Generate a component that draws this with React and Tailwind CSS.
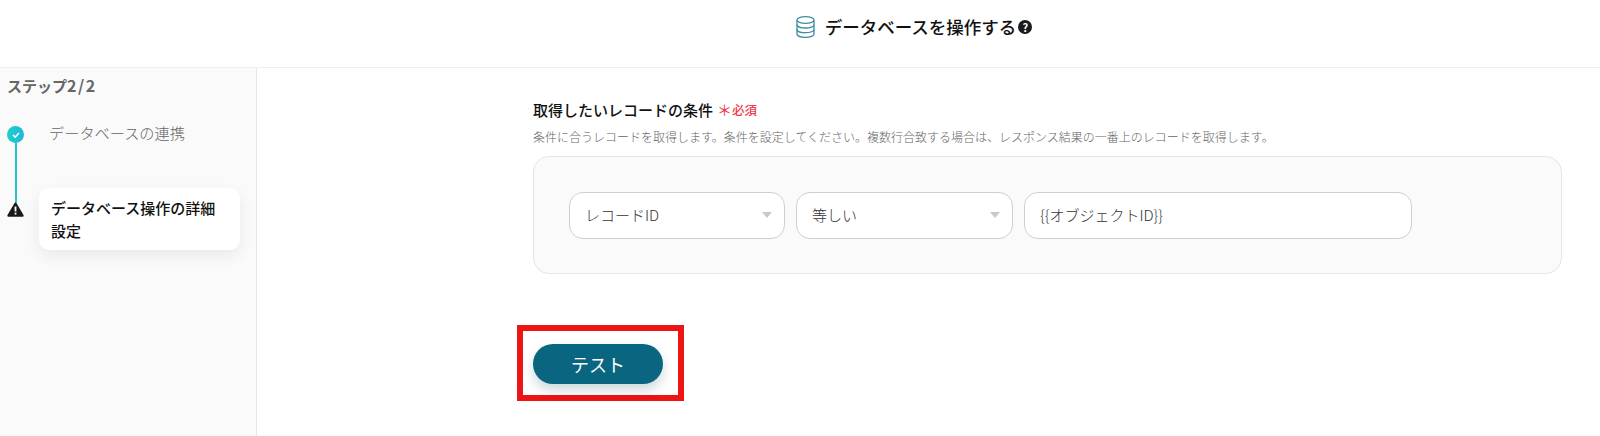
const FONT = "font-['Noto_Sans_CJK_JP','Noto_Sans',sans-serif]";

function DatabaseIcon() {
  return (
    <svg width="19" height="22" viewBox="0 0 19 22" fill="none" stroke="#3f8ba3" strokeWidth="1.3">
      <ellipse cx="9.500" cy="4" rx="8.500" ry="3.300" />
      <path d="M1 4v14c0 1.900 3.800 3.300 8.500 3.300s8.500-1.400 8.500-3.300V4" />
      <path d="M1 8.700c0 1.900 3.800 3.300 8.500 3.300s8.500-1.400 8.500-3.300" />
      <path d="M1 13.400c0 1.900 3.800 3.300 8.500 3.300s8.500-1.400 8.500-3.300" />
    </svg>
  );
}

function HelpIcon() {
  return (
    <span className="flex h-[14px] w-[14px] items-center justify-center rounded-full bg-[#1a1a1a] text-[11px] font-bold leading-none text-white">
      ?
    </span>
  );
}

function SelectBox({ label, className }) {
  return (
    <div className={`flex h-[47px] items-center justify-between rounded-[14px] border border-[#cfcfcf] bg-white pl-[15px] pr-[12px] text-[15px] font-light text-[#333] ${className}`}>
      <span>{label}</span>
      <svg width="10" height="6" viewBox="0 0 10 6" fill="#c9c9c9">
        <path d="M0 0h10L5 6z" />
      </svg>
    </div>
  );
}

export default function App() {
  return (
    <div className={`flex h-[436px] flex-col overflow-hidden bg-white ${FONT}`}>
      {/* header */}
      <div className="flex h-[68px] shrink-0 items-start justify-center border-b border-[#eeeeee] pl-[228px] pt-[16px]">
        <div className="flex items-center">
          <DatabaseIcon />
          <span className="ml-[10px] text-[17.500px] font-medium leading-[22px] text-[#111]">データベースを操作する</span>
          <span className="ml-[2px]"><HelpIcon /></span>
        </div>
      </div>

      <div className="flex min-h-0 flex-1">
        {/* sidebar */}
        <div className="w-[257px] shrink-0 border-r border-[#e6e6e6] bg-[#fafafa]">
          <div className="pl-[7px] pt-[6px] text-[15px] font-bold leading-[22px] text-[#666]">
            ステップ<span className="text-[16px] tracking-[1.500px]">2/2</span>
          </div>
          <div className="mt-[26px] flex items-start pl-[7px]">
            <div className="flex w-[17px] shrink-0 flex-col items-center pt-[3px]">
              <span className="flex h-[17px] w-[17px] items-center justify-center rounded-full bg-gradient-to-r from-[#1fcfc4] to-[#22b5e0]">
                <svg width="10" height="10" viewBox="0 0 10 10" fill="none" stroke="#fff" strokeWidth="1.600">
                  <path d="M2 5l2.200 2.200L8 3" />
                </svg>
              </span>
              <span className="h-[60px] w-[2px] bg-[#25c7c9]" />
              <svg width="17" height="15" viewBox="0 0 17 15" fill="#1a1a1a" className="-mt-[1px]">
                <path d="M8.500 0.500a1.300 1.300 0 0 1 1.100.7l6.900 11.700a1.300 1.300 0 0 1-1.100 1.900H1.600a1.300 1.300 0 0 1-1.100-1.900L7.400 1.200a1.300 1.300 0 0 1 1.100-.7z" />
                <rect x="7.600" y="4.500" width="1.800" height="5" fill="#fff" />
                <rect x="7.600" y="10.700" width="1.800" height="1.800" fill="#fff" />
              </svg>
            </div>
            <div className="ml-[15px] w-[201px]">
              <div className="pl-[10px] text-[15.200px] font-light leading-[18px] text-[#666]">データベースの連携</div>
              <div className="mt-[47px] rounded-[10px] bg-white px-[12px] py-[8px] text-[15px] font-medium leading-[23px] text-[#111] shadow-[0_6px_16px_rgba(0,0,0,0.07)]">
                データベース操作の詳細設定
              </div>
            </div>
          </div>
        </div>

        {/* main */}
        <div className="min-w-0 flex-1 pl-[276px] pr-[38px]">
          <div className="mt-[31px] flex items-center leading-[22px]">
            <span className="text-[15px] font-medium text-[#111]">取得したいレコードの条件</span>
            <span className="ml-[4px] text-[15px] text-[#f03a4c]">＊</span>
            <span className="text-[12.500px] font-medium text-[#f03a4c]">必須</span>
          </div>
          <div className="mt-[7px] text-[12px] font-light leading-[17px] text-[#666]">
            条件に合うレコードを取得します。条件を設定してください。複数行合致する場合は、レスポンス結果の一番上のレコードを取得します。
          </div>
          <div className="mt-[11px] flex h-[118px] items-center gap-[11px] rounded-[16px] border border-[#e4e4ea] bg-[#fafafa] pl-[35px] pr-[149px]">
            <SelectBox label="レコードID" className="w-[216px]" />
            <SelectBox label="等しい" className="w-[217px]" />
            <div className="flex h-[47px] flex-1 items-center rounded-[14px] border border-[#cfcfcf] bg-white pl-[15px] text-[15px] font-light text-[#333]">
              {'{{オブジェクトID}}'}
            </div>
          </div>

          {/* red annotation round the button */}
          <div className="-ml-[16px] mt-[51px] inline-block border-[6px] border-[#ec1414] pb-[11px] pl-[10px] pr-[15px] pt-[13px]">
            <button className="h-[40px] w-[130px] rounded-full bg-[#0a6680] text-[18px] text-white shadow-[0_6px_12px_rgba(11,60,80,0.2)]">
              テスト
            </button>
          </div>
        </div>
      </div>
    </div>
  );
}
